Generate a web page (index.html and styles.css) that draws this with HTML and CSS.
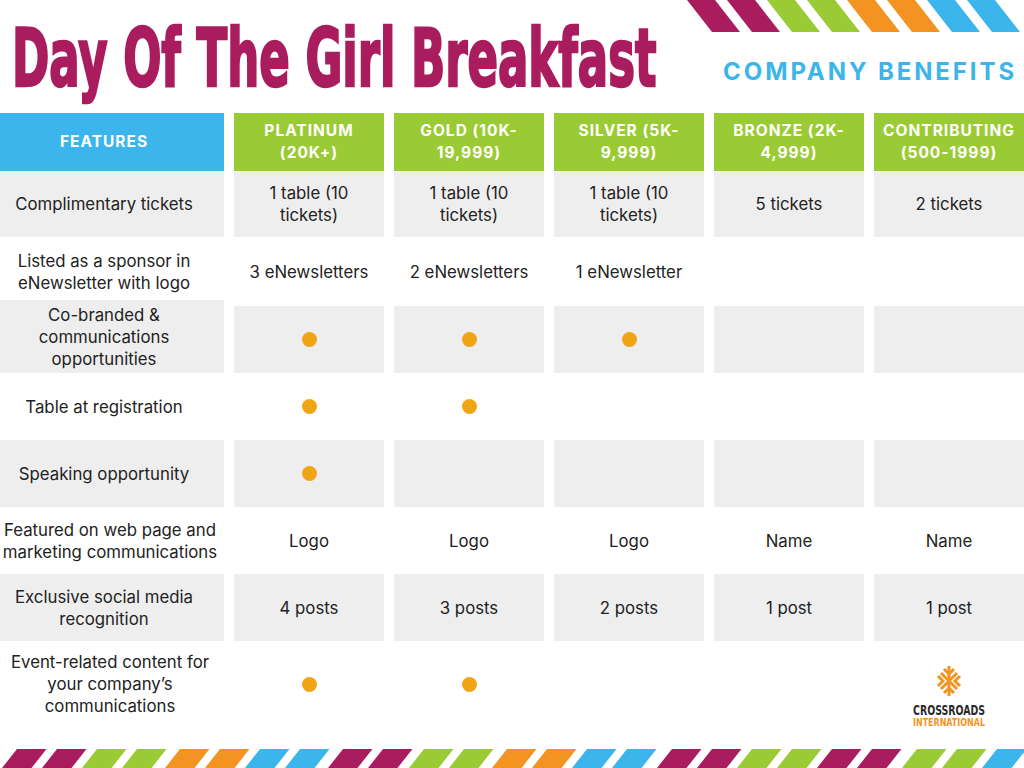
FILE: index.html
```html
<!DOCTYPE html>
<html lang="en">
<head>
<meta charset="utf-8">
<title>Day Of The Girl Breakfast – Company Benefits</title>
<link rel="stylesheet" href="styles.css">
</head>
<body>
<div class="page">
  <header class="top">
    <h1 class="title"><span class="title-text">Day Of The Girl Breakfast</span></h1>
    <div class="brand">
      <svg class="stripes-top" width="344" height="32" viewBox="680 0 344 32" aria-hidden="true">
        <polygon class="m" points="687,0 715,0 740,32 712,32"/>
        <polygon class="m" points="727,0 755,0 780,32 752,32"/>
        <polygon class="g" points="767,0 795,0 820,32 792,32"/>
        <polygon class="g" points="807,0 835,0 860,32 832,32"/>
        <polygon class="o" points="847,0 875,0 900,32 872,32"/>
        <polygon class="o" points="887,0 915,0 940,32 912,32"/>
        <polygon class="b" points="927,0 955,0 980,32 952,32"/>
        <polygon class="b" points="967,0 995,0 1020,32 992,32"/>
      </svg>
      <h2 class="subtitle">COMPANY BENEFITS</h2>
    </div>
  </header>

  <main class="table">
    <div class="th th-feat">FEATURES</div>
    <div class="th th-tier">PLATINUM<br>(20K+)</div>
    <div class="th th-tier">GOLD (10K-<br>19,999)</div>
    <div class="th th-tier">SILVER (5K-<br>9,999)</div>
    <div class="th th-tier">BRONZE (2K-<br>4,999)</div>
    <div class="th th-tier">CONTRIBUTING<br>(500-1999)</div>

    <div class="td feat gray">Complimentary tickets</div>
    <div class="td gray">1 table (10<br>tickets)</div>
    <div class="td gray">1 table (10<br>tickets)</div>
    <div class="td gray">1 table (10<br>tickets)</div>
    <div class="td gray">5 tickets</div>
    <div class="td gray">2 tickets</div>

    <div class="td feat">Listed as a sponsor in<br>eNewsletter with logo</div>
    <div class="td">3 eNewsletters</div>
    <div class="td">2 eNewsletters</div>
    <div class="td">1 eNewsletter</div>
    <div class="td"></div>
    <div class="td"></div>

    <div class="td feat gray tall">Co-branded &amp;<br>communications<br>opportunities</div>
    <div class="td gray"><span class="dot"></span></div>
    <div class="td gray"><span class="dot"></span></div>
    <div class="td gray"><span class="dot"></span></div>
    <div class="td gray"></div>
    <div class="td gray"></div>

    <div class="td feat">Table at registration</div>
    <div class="td"><span class="dot"></span></div>
    <div class="td"><span class="dot"></span></div>
    <div class="td"></div>
    <div class="td"></div>
    <div class="td"></div>

    <div class="td feat gray">Speaking opportunity</div>
    <div class="td gray"><span class="dot"></span></div>
    <div class="td gray"></div>
    <div class="td gray"></div>
    <div class="td gray"></div>
    <div class="td gray"></div>

    <div class="td feat wide">Featured on web page and<br>marketing communications</div>
    <div class="td">Logo</div>
    <div class="td">Logo</div>
    <div class="td">Logo</div>
    <div class="td">Name</div>
    <div class="td">Name</div>

    <div class="td feat gray">Exclusive social media<br>recognition</div>
    <div class="td gray">4 posts</div>
    <div class="td gray">3 posts</div>
    <div class="td gray">2 posts</div>
    <div class="td gray">1 post</div>
    <div class="td gray">1 post</div>

    <div class="td feat wide">Event-related content for<br>your company’s<br>communications</div>
    <div class="td"><span class="dot"></span></div>
    <div class="td"><span class="dot"></span></div>
    <div class="td"></div>
    <div class="td"></div>
    <div class="td logo-cell">
      <svg class="logo" width="76" height="61" viewBox="0 0 76 61" role="img" aria-label="Crossroads International">
        <g transform="translate(26,0)" fill="none" stroke="#F39322" stroke-width="3">
          <path d="M12 0 V30"/>
          <path d="M4 7 L20 23 M20 7 L4 23"/>
          <path d="M7 3 L12 8 L17 3"/>
          <path d="M7 27 L12 22 L17 27"/>
          <path d="M1 10 L6 15 L1 20"/>
          <path d="M23 10 L18 15 L23 20"/>
        </g>
        <text class="logo-main" x="2" y="48.5" textLength="72" lengthAdjust="spacingAndGlyphs">CROSSROADS</text>
        <text class="logo-sub" x="2" y="59.5" textLength="72" lengthAdjust="spacingAndGlyphs">INTERNATIONAL</text>
      </svg>
    </div>
  </main>

  <footer class="bottom">
    <svg class="stripes-bottom" width="1024" height="19" viewBox="0 0 1024 19" aria-hidden="true">
      <polygon class="m" points="17,0 46.5,0 31.5,19 2,19"/>
      <polygon class="m" points="57,0 86.5,0 71.5,19 42,19"/>
      <polygon class="g" points="97,0 126.5,0 111.5,19 82,19"/>
      <polygon class="g" points="137,0 166.5,0 151.5,19 122,19"/>
      <polygon class="o" points="180,0 209.5,0 194.5,19 165,19"/>
      <polygon class="o" points="220,0 249.5,0 234.5,19 205,19"/>
      <polygon class="b" points="260,0 289.5,0 274.5,19 245,19"/>
      <polygon class="b" points="300,0 329.5,0 314.5,19 285,19"/>
      <polygon class="m" points="343,0 372.5,0 357.5,19 328,19"/>
      <polygon class="m" points="383,0 412.5,0 397.5,19 368,19"/>
      <polygon class="g" points="424,0 453.5,0 438.5,19 409,19"/>
      <polygon class="g" points="464,0 493.5,0 478.5,19 449,19"/>
      <polygon class="o" points="507,0 536.5,0 521.5,19 492,19"/>
      <polygon class="o" points="547,0 576.5,0 561.5,19 532,19"/>
      <polygon class="b" points="587,0 616.5,0 601.5,19 572,19"/>
      <polygon class="b" points="627,0 656.5,0 641.5,19 612,19"/>
      <polygon class="m" points="672,0 701.5,0 686.5,19 657,19"/>
      <polygon class="m" points="712,0 741.5,0 726.5,19 697,19"/>
      <polygon class="g" points="752,0 781.5,0 766.5,19 737,19"/>
      <polygon class="g" points="792,0 821.5,0 806.5,19 777,19"/>
      <polygon class="m" points="832,0 861.5,0 846.5,19 817,19"/>
      <polygon class="m" points="872,0 901.5,0 886.5,19 857,19"/>
      <polygon class="g" points="917,0 946.5,0 931.5,19 902,19"/>
      <polygon class="g" points="957,0 986.5,0 971.5,19 942,19"/>
      <polygon class="b" points="997,0 1026.5,0 1011.5,19 982,19"/>
    </svg>
  </footer>
</div>
</body>
</html>
```

FILE: styles.css
```css
* { box-sizing: border-box; }

html, body {
  margin: 0;
  padding: 0;
  background: #ffffff;
}

body {
  font-family: Inter, "Noto Sans", "DejaVu Sans", sans-serif;
  color: #222222;
}

.page {
  width: 1024px;
  height: 768px;
  display: flex;
  flex-direction: column;
  overflow: hidden;
}

/* ---------- header ---------- */
.top {
  height: 113px;
  display: flex;
  align-items: flex-start;
}

.title {
  flex: 1 1 auto;
  min-width: 0;
  margin: 0;
  padding: 19px 0 0 12px;
  font-family: "Liberation Sans Narrow", "DejaVu Sans Condensed", "DejaVu Sans", sans-serif;
  font-stretch: condensed;
  font-weight: 700;
  font-size: 80px;
  line-height: 80px;
  color: #A91D5F;
  white-space: nowrap;
  overflow: visible;
}

.title-text {
  display: inline-block;
  transform: scaleX(0.625);
  transform-origin: left center;
  -webkit-text-stroke: 2.5px #A91D5F;
}

.brand {
  flex: 0 0 344px;
  width: 344px;
  display: flex;
  flex-direction: column;
  align-items: flex-end;
}

.stripes-top { display: block; }

.subtitle {
  margin: 28px 0 0 0;
  padding-right: 7px;
  font-family: Inter, "Noto Sans", sans-serif;
  font-weight: 700;
  font-size: 24px;
  line-height: 24px;
  letter-spacing: 2.9px;
  color: #3CB4EC;
  white-space: nowrap;
}

/* ---------- table ---------- */
.table {
  display: grid;
  grid-template-columns: 224px repeat(5, 150px);
  grid-template-rows: 58px 66px 69px 67px 67px 67px 67px 67px 86px;
  column-gap: 10px;
}

.th {
  display: flex;
  align-items: center;
  justify-content: center;
  text-align: center;
  color: #ffffff;
  font-weight: 700;
  font-size: 15.5px;
  line-height: 22px;
  letter-spacing: 1px;
}

.th-feat {
  background: #3CB4EC;
  padding-right: 16px;
}
.th-tier { background: #9BCB34; }

.td {
  display: flex;
  align-items: center;
  justify-content: center;
  text-align: center;
  font-size: 16.8px;
  line-height: 22px;
  color: #222222;
  white-space: nowrap;
}

.feat { padding-right: 16px; }
.feat.wide { padding-right: 4px; }

.gray { background: #EEEEEE; }

.tall { margin-top: -6px; }

.dot {
  display: block;
  width: 15px;
  height: 15px;
  border-radius: 50%;
  background: #EFA516;
}

.logo-cell {
  flex-direction: column;
  justify-content: flex-end;
}

.logo { display: block; }

.logo-main {
  font-family: "Liberation Sans Narrow", "DejaVu Sans Condensed", "DejaVu Sans", sans-serif;
  font-weight: 700;
  font-size: 14.5px;
  fill: #2A2A2A;
}

.logo-sub {
  font-family: "Liberation Sans Narrow", "DejaVu Sans Condensed", "DejaVu Sans", sans-serif;
  font-weight: 700;
  font-size: 10.5px;
  fill: #F39322;
}

/* ---------- footer ---------- */
.bottom {
  margin-top: auto;
  height: 19px;
}

.stripes-bottom { display: block; }

.m { fill: #A91D5F; }
.g { fill: #9BCB34; }
.o { fill: #F39322; }
.b { fill: #3CB4EC; }
```
